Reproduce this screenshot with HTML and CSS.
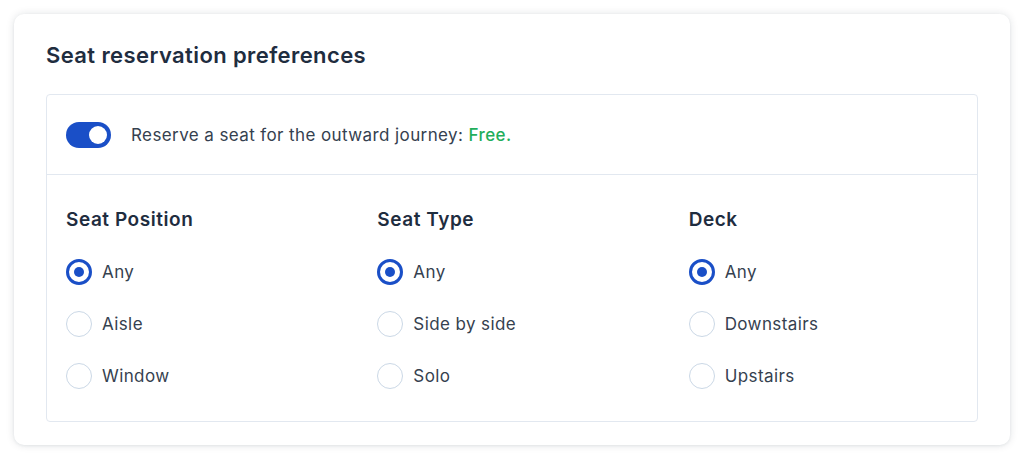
FILE: index.html
```html
<!DOCTYPE html>
<html lang="en">
<head>
<meta charset="utf-8">
<title>Seat reservation preferences</title>
<link rel="stylesheet" href="styles.css">
</head>
<body>
<section class="card">
  <h2 class="title">Seat reservation preferences</h2>
  <div class="panel">
    <div class="toggle-row">
      <span class="toggle" role="switch" aria-checked="true"><span class="knob"></span></span>
      <span class="toggle-label">Reserve a seat for the outward journey: <span class="free">Free.</span></span>
    </div>
    <div class="columns">
      <div class="group">
        <h3 class="group-title">Seat Position</h3>
        <label class="option"><span class="radio checked"></span>Any</label>
        <label class="option"><span class="radio"></span>Aisle</label>
        <label class="option"><span class="radio"></span>Window</label>
      </div>
      <div class="group">
        <h3 class="group-title">Seat Type</h3>
        <label class="option"><span class="radio checked"></span>Any</label>
        <label class="option"><span class="radio"></span>Side by side</label>
        <label class="option"><span class="radio"></span>Solo</label>
      </div>
      <div class="group">
        <h3 class="group-title">Deck</h3>
        <label class="option"><span class="radio checked"></span>Any</label>
        <label class="option"><span class="radio"></span>Downstairs</label>
        <label class="option"><span class="radio"></span>Upstairs</label>
      </div>
    </div>
  </div>
</section>
</body>
</html>
```
FILE: styles.css
```css
* { box-sizing: border-box; }
html, body { margin: 0; padding: 0; background: #ffffff; }
body {
  font-family: Inter, "Noto Sans", "Liberation Sans", sans-serif;
  color: #273446;
  padding: 14px;
}
.card {
  width: 996px;
  height: 431px;
  background: #fff;
  border-radius: 10px;
  box-shadow: 0 0 8px rgba(20, 30, 50, 0.12), 0 1px 3px rgba(20, 30, 50, 0.06);
  padding: 28px 32px 0 32px;
}
.title {
  margin: 0;
  font-size: 22px;
  line-height: 26px;
  font-weight: 600;
  color: #1f2d3f;
  letter-spacing: 0.4px;
}
.panel {
  margin-top: 26px;
  border: 1px solid #e2e8f0;
  border-radius: 4px;
  height: 328px;
}
.toggle-row {
  height: 80px;
  display: flex;
  align-items: center;
  padding: 0 19px;
  border-bottom: 1px solid #e2e8f0;
}
.toggle {
  width: 45px;
  height: 26px;
  border-radius: 13px;
  background: #1a4fc7;
  position: relative;
  flex: none;
}
.knob {
  position: absolute;
  right: 4px;
  top: 4px;
  width: 18px;
  height: 18px;
  border-radius: 50%;
  background: #fff;
}
.toggle-label {
  margin-left: 20px;
  font-size: 17px;
  letter-spacing: 0.4px;
  color: #35414f;
}
.free { color: #1fae5b; font-weight: 500; }
.columns {
  display: grid;
  grid-template-columns: repeat(3, 1fr);
  column-gap: 42px;
  padding: 33px 19px 0 19px;
}
.group-title {
  margin: 0 0 14px 0;
  font-size: 19px;
  line-height: 24px;
  font-weight: 600;
  letter-spacing: 0.55px;
  color: #1f2d3f;
}
.option {
  display: flex;
  align-items: center;
  height: 52px;
  font-size: 17px;
  letter-spacing: 0.4px;
  color: #35414f;
}
.radio {
  width: 26px;
  height: 26px;
  border-radius: 50%;
  border: 1.5px solid #cbd8e6;
  margin-right: 10px;
  flex: none;
  display: flex;
  align-items: center;
  justify-content: center;
}
.radio.checked {
  border: 3px solid #1a4fc7;
}
.radio.checked::after {
  content: "";
  width: 10px;
  height: 10px;
  border-radius: 50%;
  background: #1a4fc7;
}
```
